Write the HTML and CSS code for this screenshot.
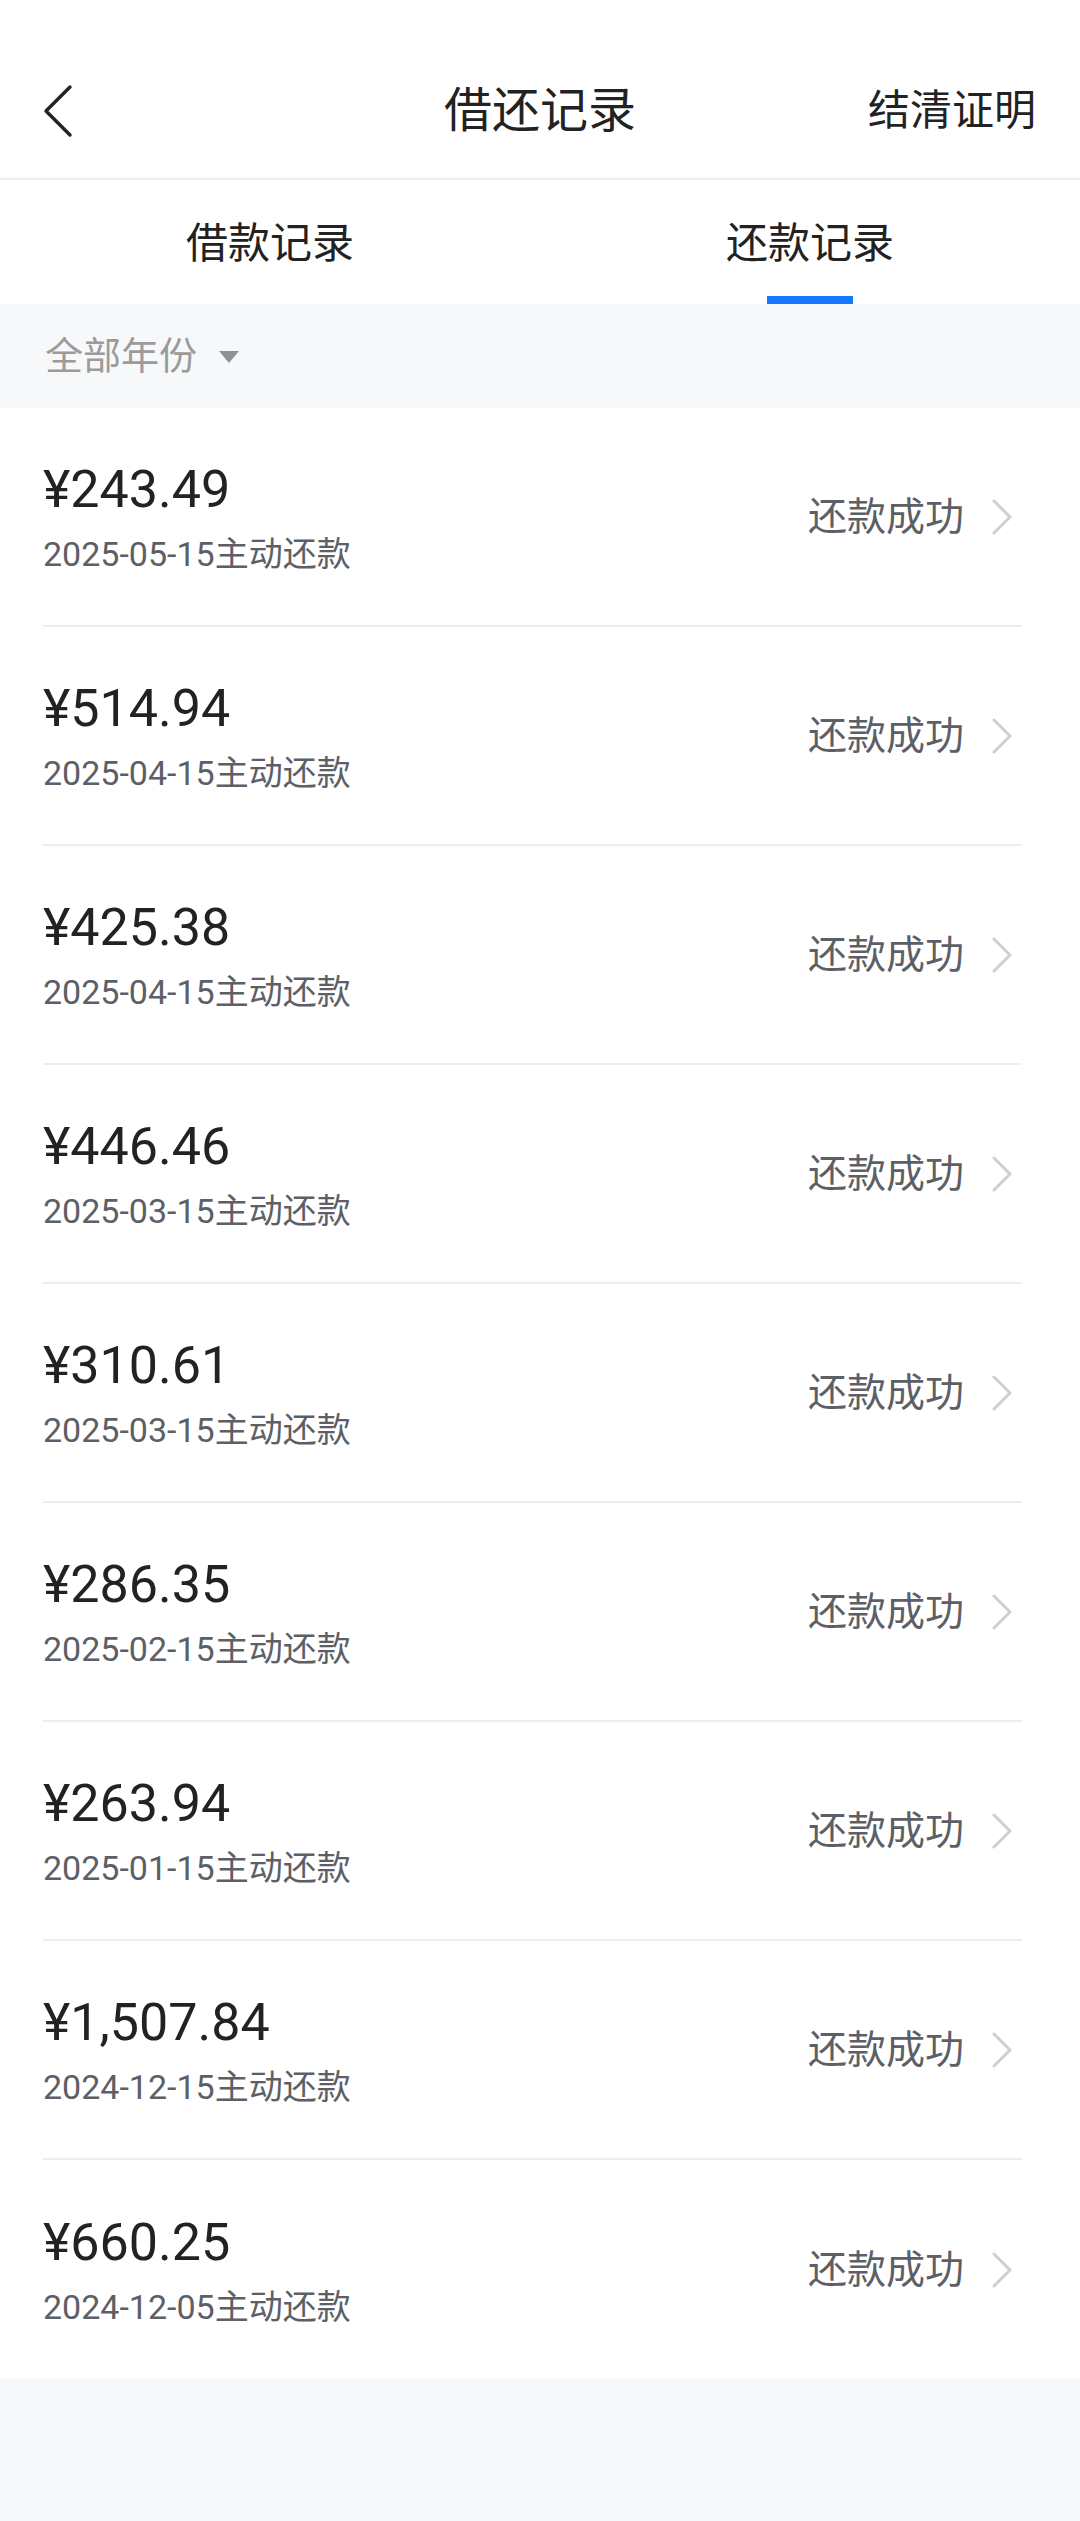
FILE: index.html
```html
<!DOCTYPE html>
<html lang="zh-CN">
<head>
<meta charset="utf-8">
<title>借还记录</title>
<link rel="stylesheet" href="styles.css">
</head>
<body>
<div class="page">
  <header class="topbar">
    <div class="back">
      <svg width="34" height="56" viewBox="0 0 34 56"><polyline points="28,4 4,28 28,52" fill="none" stroke="#222" stroke-width="3.4" stroke-linecap="round" stroke-linejoin="round"/></svg>
    </div>
    <div class="title">借还记录</div>
    <div class="action">结清证明</div>
  </header>

  <nav class="tabs">
    <div class="tab">借款记录</div>
    <div class="tab active">还款记录</div>
  </nav>

  <div class="filter">
    <span class="filter-label">全部年份</span>
    <span class="caret"></span>
  </div>

  <ul class="list">
    <li class="item"><div class="info"><div class="amount">¥243.49</div><div class="date">2025-05-15主动还款</div></div><div class="status">还款成功</div><svg class="chev" width="22" height="36" viewBox="0 0 22 36"><polyline points="3,2 19,18 3,34" fill="none" stroke="#cfcfcf" stroke-width="3" stroke-linecap="round" stroke-linejoin="round"/></svg></li>
    <li class="item"><div class="info"><div class="amount">¥514.94</div><div class="date">2025-04-15主动还款</div></div><div class="status">还款成功</div><svg class="chev" width="22" height="36" viewBox="0 0 22 36"><polyline points="3,2 19,18 3,34" fill="none" stroke="#cfcfcf" stroke-width="3" stroke-linecap="round" stroke-linejoin="round"/></svg></li>
    <li class="item"><div class="info"><div class="amount">¥425.38</div><div class="date">2025-04-15主动还款</div></div><div class="status">还款成功</div><svg class="chev" width="22" height="36" viewBox="0 0 22 36"><polyline points="3,2 19,18 3,34" fill="none" stroke="#cfcfcf" stroke-width="3" stroke-linecap="round" stroke-linejoin="round"/></svg></li>
    <li class="item"><div class="info"><div class="amount">¥446.46</div><div class="date">2025-03-15主动还款</div></div><div class="status">还款成功</div><svg class="chev" width="22" height="36" viewBox="0 0 22 36"><polyline points="3,2 19,18 3,34" fill="none" stroke="#cfcfcf" stroke-width="3" stroke-linecap="round" stroke-linejoin="round"/></svg></li>
    <li class="item"><div class="info"><div class="amount">¥310.61</div><div class="date">2025-03-15主动还款</div></div><div class="status">还款成功</div><svg class="chev" width="22" height="36" viewBox="0 0 22 36"><polyline points="3,2 19,18 3,34" fill="none" stroke="#cfcfcf" stroke-width="3" stroke-linecap="round" stroke-linejoin="round"/></svg></li>
    <li class="item"><div class="info"><div class="amount">¥286.35</div><div class="date">2025-02-15主动还款</div></div><div class="status">还款成功</div><svg class="chev" width="22" height="36" viewBox="0 0 22 36"><polyline points="3,2 19,18 3,34" fill="none" stroke="#cfcfcf" stroke-width="3" stroke-linecap="round" stroke-linejoin="round"/></svg></li>
    <li class="item"><div class="info"><div class="amount">¥263.94</div><div class="date">2025-01-15主动还款</div></div><div class="status">还款成功</div><svg class="chev" width="22" height="36" viewBox="0 0 22 36"><polyline points="3,2 19,18 3,34" fill="none" stroke="#cfcfcf" stroke-width="3" stroke-linecap="round" stroke-linejoin="round"/></svg></li>
    <li class="item"><div class="info"><div class="amount">¥1,507.84</div><div class="date">2024-12-15主动还款</div></div><div class="status">还款成功</div><svg class="chev" width="22" height="36" viewBox="0 0 22 36"><polyline points="3,2 19,18 3,34" fill="none" stroke="#cfcfcf" stroke-width="3" stroke-linecap="round" stroke-linejoin="round"/></svg></li>
    <li class="item"><div class="info"><div class="amount">¥660.25</div><div class="date">2024-12-05主动还款</div></div><div class="status">还款成功</div><svg class="chev" width="22" height="36" viewBox="0 0 22 36"><polyline points="3,2 19,18 3,34" fill="none" stroke="#cfcfcf" stroke-width="3" stroke-linecap="round" stroke-linejoin="round"/></svg></li>
  </ul>
</div>
</body>
</html>
```

FILE: styles.css
```css
* {
  box-sizing: border-box;
}

html, body {
  margin: 0;
  padding: 0;
}

body {
  background: #f7f8fa;
  font-family: Roboto, "Noto Sans CJK SC", "Noto Sans", sans-serif;
  color: #222;
}

.page {
  width: 1080px;
  min-height: 2521px;
  background: #f7f8fa;
}

/* Top bar */
.topbar {
  height: 180px;
  background: #fff;
  border-bottom: 2px solid #eeeeee;
  padding-top: 44px;
  display: grid;
  grid-template-columns: 1fr auto 1fr;
  align-items: center;
}

.back {
  height: 134px;
  display: flex;
  align-items: center;
  padding-left: 42px;
}

.back svg {
  display: block;
}

.title {
  font-size: 48px;
  line-height: 60px;
  color: #222;
}

.action {
  justify-self: end;
  font-size: 42px;
  line-height: 56px;
  color: #222;
  padding-right: 44px;
}

/* Tabs */
.tabs {
  height: 124px;
  background: #fff;
  display: grid;
  grid-template-columns: 1fr 1fr;
}

.tab {
  position: relative;
  display: flex;
  align-items: center;
  justify-content: center;
  font-size: 42px;
  color: #222;
  padding-bottom: 6px;
}

.tab.active::after {
  content: "";
  position: absolute;
  left: 50%;
  bottom: 0;
  width: 86px;
  height: 8px;
  margin-left: -43px;
  background: #1677ff;
}

/* Filter */
.filter {
  height: 104px;
  background: #f7f8fa;
  display: flex;
  align-items: center;
  padding-left: 45px;
}

.filter-label {
  font-size: 38px;
  line-height: 50px;
  color: #9b9b9b;
}

.caret {
  width: 0;
  height: 0;
  margin-left: 22px;
  margin-top: 2px;
  border-left: 10px solid transparent;
  border-right: 10px solid transparent;
  border-top: 12px solid #8e9196;
}

/* List */
.list {
  list-style: none;
  margin: 0;
  padding: 0;
  background: #fff;
}

.item {
  height: 219px;
  margin: 0 58px 0 43px;
  border-bottom: 2px solid #eeeeee;
  display: flex;
  align-items: center;
}

.item:last-child {
  border-bottom: none;
}

.info {
  flex: 1;
  display: flex;
  flex-direction: column;
  gap: 12px;
  margin-top: 2px;
}

.amount {
  font-size: 52px;
  line-height: 60px;
  color: #222;
}

.date {
  font-size: 34px;
  line-height: 44px;
  color: #5c6066;
}

.status {
  font-size: 39px;
  line-height: 50px;
  color: #5c6066;
}

.chev {
  display: block;
  margin-left: 27px;
  margin-right: 9px;
}
```
